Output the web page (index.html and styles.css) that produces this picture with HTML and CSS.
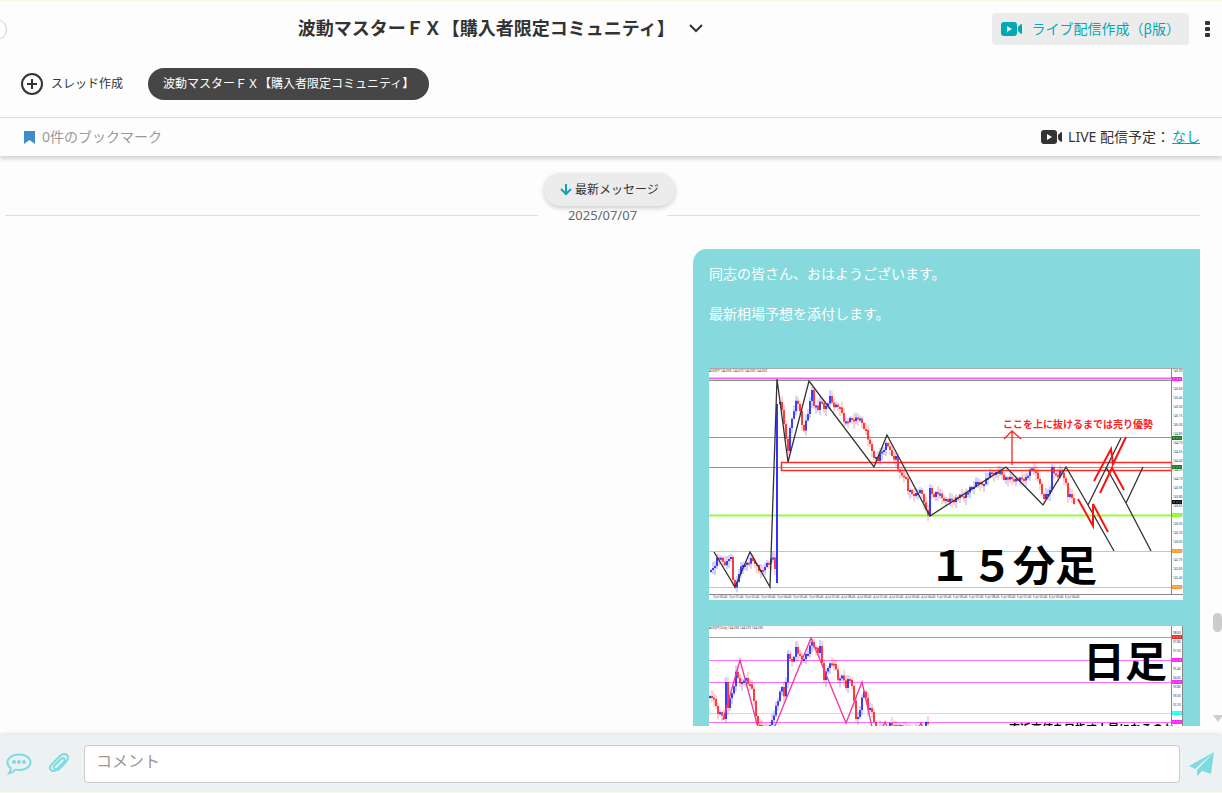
FILE: index.html
```html
<!DOCTYPE html>
<html lang="ja">
    <head>
        <meta charset="utf-8">
        <title>波動マスターＦＸ</title>
        <link rel="stylesheet" href="styles.css">
    </head>
    <body>
        <header class="header">
            <button class="header__back" aria-label="戻る"></button>
            <div class="header__top">
                <h1 class="header__title">波動マスターＦＸ【購入者限定コミュニティ】</h1>
                <button class="iconButton header__chevron" aria-label="メニューを開く">
                    <svg width="14" height="10" viewBox="0 0 14 10"><path d="M1 2l6 6 6-6" fill="none" stroke="#333" stroke-width="2"/></svg>
                </button>
            </div>
            <button class="liveButton">
                <svg width="21" height="14" viewBox="0 0 21 14"><path fill="#00a9b5" fill-rule="evenodd" d="M3 0h10q3 0 3 3v8q0 3-3 3H3q-3 0-3-3V3q0-3 3-3zM6 4v6l5-3zM17 5l3-3q1 0 1 1v8q0 1-1 1l-3-3z"/></svg>
                ライブ配信作成（β版）
            </button>
            <button class="iconButton header__more" aria-label="その他">
                <svg width="5" height="17" viewBox="0 0 5 17" fill="#333"><rect width="5" height="4" rx="1"/><rect y="6" width="5" height="4" rx="1"/><rect y="12" width="5" height="4" rx="1"/></svg>
            </button>
        </header>

        <nav class="threads">
            <button class="threads__new">
                <svg width="22" height="22" viewBox="0 0 22 22" fill="none" stroke="#333" stroke-width="2"><circle cx="11" cy="11" r="10"/><path d="M6 11h10M11 6v10"/></svg>
                <span>スレッド作成</span>
            </button>
            <button class="threads__pill">波動マスターＦＸ【購入者限定コミュニティ】</button>
        </nav>

        <div class="info">
            <div class="info__bookmark">
                <svg width="11" height="13" viewBox="0 0 11 13"><path fill="#428bca" d="M0 0h11v13L5.500 9 0 13z"/></svg>
                <span>0件のブックマーク</span>
            </div>
            <div class="info__live">
                <svg width="21" height="14" viewBox="0 0 21 14"><path fill="#333" fill-rule="evenodd" d="M3 0h10q3 0 3 3v8q0 3-3 3H3q-3 0-3-3V3q0-3 3-3zM6 4v6l5-3zM17 5l3-3q1 0 1 1v8q0 1-1 1l-3-3z"/></svg>
                <div>
                    <span>LIVE 配信予定：</span><a href="#">なし</a>
                </div>
            </div>
        </div>

        <main class="messages">
            <button class="latest">
                <svg width="12" height="12" viewBox="0 0 12 12"><path d="M6 0v10M1 5l5 5 5-5" fill="none" stroke="#169fba" stroke-width="2"/></svg>
                最新メッセージ
            </button>
            <div class="messages__list">
                <div class="date">2025/07/07</div>
                <div class="bubble">
                    <p>同志の皆さん、おはようございます。</p>
                    <p>最新相場予想を添付します。</p>

                    <svg class="chart" viewBox="0 0 474 232" role="img" aria-label="15分足チャート">
                        <rect width="474" height="232" fill="#fff"/>
                        <path d="M0 .5h474" stroke="#aaa"/>
                        <text class="chart__tiny" x="0" y="4">AUDJPY 144.056 144.070 144.030 144.032</text>
                        <path d="M0 10.500h462" stroke="#ff5cff" stroke-width="2"/>
                        <path d="M0 12.500h462M0 69.500h462M0 99.500h462" stroke="#7da67d"/>
                        <path d="M0 147.500h462" stroke="#94fb3f" stroke-width="2"/>
                        <path d="M0 183.500h462M0 219.500h462" stroke="#fbb96a"/>
                        <g id="candles15"></g>
                        <path d="M68 36v179" stroke="#33f" stroke-width="2"/>
                        <rect x="72.500" y="94.500" width="390" height="8" fill="none" stroke="#ff2a2a" stroke-width="1.500"/>
                        <path d="M5 184l21 35 15-35 20 35 7-208 11 83 21-81 65 86 13-32 43 81 76-49 37 38 23-38 22 38 26 46M379 137l33-67M397 99l20 36 25 48M417 135l17-36" fill="none" stroke="#333" stroke-width="1.300"/>
                        <path d="M303 97V63M295 71l8-8 9 8" fill="none" stroke="#f22" stroke-width="1.300"/>
                        <path d="M369 131l15 27v-22l15 28M385 113l17-32 2 15 13-27M391 125l12-25 12 22" fill="none" stroke="#f11" stroke-width="2"/>
                        <text class="chart__note" x="294" y="60">ここを上に抜けるまでは売り優勢</text>
                        <text class="chart__title" x="220" y="213">１５分足</text>
                        <path d="M462.500 0v226M0 226.500h474" stroke="#888" fill="none"/>
                        <g id="axis15"></g>
                    </svg>

                    <svg class="chart" viewBox="0 0 474 232" role="img" aria-label="日足チャート">
                        <rect width="474" height="232" fill="#fff"/>
                        <text class="chart__tiny" x="0" y="3">AUDJPY,Daily  144.030 144.070 144.030</text>
                        <path d="M0 11.500h462" stroke="#ff7c7c"/>
                        <path d="M0 34.500h462M0 56.500h462M0 96.500h462" stroke="#ff6cff"/>
                        <path d="M0 87.500h462" stroke="#8cfbfb"/>
                        <g id="candlesDay"></g>
                        <path d="M14 94l17-60 20 75M62 110l40-98 35 85 16-41 12 54M170 110l6-14 6 14M206 110l6-13 6 13" fill="none" stroke="#f5319f" stroke-width="1.300"/>
                        <text class="chart__title" x="374" y="51">日足</text>
                        <text class="chart__memo" x="300" y="107">直近高値を目指す上昇になるのか</text>
                        <path d="M462.500 0v232M473.500 0v232" stroke="#888"/>
                        <g id="axisDay"></g>
                    </svg>
                </div>
            </div>
            <div class="scrollbar">
                <span class="scrollbar__thumb"></span>
                <span class="scrollbar__arrow"></span>
            </div>
        </main>

        <form class="comment">
            <button type="button" class="iconButton" aria-label="スタンプ">
                <svg width="26" height="22" viewBox="0 0 26 22"><path d="M13 1.500c6.500 0 11.500 3.400 11.500 7.800S19.500 17 13 17c-1.200 0-2.300-.1-3.400-.4C7.800 18.600 5.500 20 3 20.300c1.200-1.500 1.800-3 1.800-5C2.700 13.800 1.500 11.700 1.500 9.300c0-4.400 5-7.800 11.500-7.800z" fill="none" stroke="#7fdade" stroke-width="2"/><g fill="#7fdade"><circle cx="8" cy="9" r="2"/><circle cx="13" cy="9" r="2"/><circle cx="18" cy="9" r="2"/></g></svg>
            </button>
            <button type="button" class="iconButton" aria-label="ファイル添付">
                <svg width="22" height="22" viewBox="0 0 22 22"><path d="M6 13l7-7c2-2 5 0 3 3l-7 7c-2 2-4 3-6 1s-1-4 1-6l8-8c3-3 6-2 7-1s2 4-1 7l-8 8M9 16c-2 1-4-1-3-3" fill="none" stroke="#7fdade" stroke-width="2" stroke-linecap="round"/></svg>
            </button>
            <input type="text" class="comment__input" placeholder="コメント" aria-label="コメント">
            <button type="button" class="iconButton" aria-label="送信">
                <svg width="26" height="26" viewBox="0 0 26 26" fill="#7fdade"><path d="M25 1L0 15l6 3zM25 1L8 19v6l4-4zM25 1L11 19l11 4z"/></svg>
            </button>
        </form>

        <script>
            // turning points of the price, x and y in chart units
            const price15 = [[1,204],[5,196],[8,188],[12,193],[16,196],[19,190],[21,191],[23,212],[26,220],[29,205],[32,198],[35,195],[38,196],[41,192],[45,194],[49,202],[52,205],[55,197],[60,194],[64,188],[66,210]];
            const price15b = [[70,36],[73,45],[76,72],[78,82],[80,62],[83,45],[87,30],[91,50],[93,64],[97,50],[100,35],[102,22],[104,36],[108,41],[111,33],[115,41],[120,30],[123,37],[128,38],[132,45],[135,55],[140,52],[148,50],[152,55],[156,63],[160,78],[164,88],[168,92],[170,87],[174,80],[177,74],[180,84],[183,90],[186,89],[189,106],[193,108],[195,106],[198,122],[202,126],[206,126],[209,123],[213,127],[216,143],[218,146],[220,122],[223,128],[227,124],[232,130],[238,133],[244,132],[248,129],[254,128],[261,120],[268,113],[271,118],[281,105],[291,105],[294,110],[308,112],[316,110],[321,102],[323,99],[328,110],[333,130],[338,125],[340,124],[342,99],[347,110],[351,103],[355,110],[358,128],[361,128],[364,134]];
            const priceDay = [[0,72],[4,71],[7,86],[14,91],[16,57],[18,81],[23,64],[27,41],[29,61],[35,51],[39,59],[43,64],[46,91],[49,101],[60,101],[65,84],[72,61],[75,72],[78,27],[81,39],[86,22],[91,34],[98,27],[102,16],[108,26],[110,22],[114,52],[118,41],[124,36],[129,57],[133,47],[136,63],[138,52],[143,62],[146,94],[151,84],[153,59],[158,82],[163,87],[165,101],[176,104],[180,99],[212,106],[216,97],[219,97]];

            function priceAt(points, x){
                for(let i = 1;i<points.length;i++){
                    if(x<=points[i][0]){
                        const [x1,y1] = points[i-1];
                        const [x2,y2] = points[i];
                        return y1+(y2-y1)*(x-x1)/(x2-x1);
                    }
                }
                return points[points.length-1][1];
            }
            function drawCandles(id, points){
                let out = '';
                let last = points[0][1];
                let n = 0;
                for(let x = points[0][0];x<=points[points.length-1][0];x+=2){
                    const close = priceAt(points,x)+((n*7)%5-2);
                    const top = Math.min(last,close);
                    const height = Math.max(2,Math.abs(last-close));
                    const color = close>last ? '#f22' : '#22f';
                    const up = 1+(n*5)%6;
                    const down = 1+(n*3)%7;
                    out += `<path d="M${x+1} ${top-up}V${top+height+down}" stroke="${color}" opacity=".4"/>`;
                    out += `<rect x="${x}" y="${top}" width="2" height="${height}" fill="${color}" opacity=".85"/>`;
                    last = close;
                    n++;
                }
                document.getElementById(id).innerHTML += out;
            }
            function drawAxis(id, start, end, first, step, tags){
                let out = '';
                for(let y = start, i = 0;y<end;y+=9,i++){
                    out += `<text class="chart__tiny" x="464" y="${y}">${(first-i*step).toFixed(2)}</text>`;
                }
                for(const [y,color] of tags){
                    out += `<rect x="463" y="${y-2}" width="10" height="4" fill="${color}"/>`;
                    out += `<path d="M464 ${y}h8" stroke="#fff" opacity=".4" stroke-dasharray="2 1"/>`;
                }
                document.getElementById(id).innerHTML = out;
            }

            drawCandles('candles15',price15);
            drawCandles('candles15',price15b);
            drawCandles('candlesDay',priceDay);
            drawAxis('axis15',4,226,145.9,.15,[[11,'#f2f'],[70,'#1c7a1c'],[99,'#1c7a1c'],[134,'#111'],[147,'#8f2'],[183,'#f93'],[219,'#f93']]);
            drawAxis('axisDay',8,96,98.6,.8,[[11,'#f22'],[34,'#f2f'],[56,'#f2f'],[87,'#2ff'],[96,'#f2f']]);

            let times = '';
            for(let i = 0;i<23;i++){
                times += `<text class="chart__tiny" x="${4+i*16}" y="230">${3+Math.floor(i/7)} Jul 0${i%9}:45</text>`;
            }
            document.getElementById('axis15').innerHTML += times;
        </script>
    </body>
</html>
```

FILE: styles.css
```css
*{
    box-sizing: border-box;
}
body{
    display: flex;
    flex-direction: column;
    height: 100vh;
    margin: 0;
    border-top: 1px solid #f8fae8;
    border-bottom: 1px solid #f8fae8;
    background: #fdfdfd;
    color: #333;
    font-family: "Noto Sans", "Noto Sans CJK JP", sans-serif;
    font-size: 14px;
    line-height: 20px;
}
button{
    padding: 0;
    border: 0;
    background: none;
    color: inherit;
    font: inherit;
    cursor: pointer;
}
svg{
    display: block;
    flex-shrink: 0;
}
.iconButton{
    display: flex;
    align-items: center;
}
.header{
    position: relative;
    display: flex;
    align-items: center;
    height: 56px;
    padding-right: 12px;
}
.header__back{
    position: absolute;
    left: -14px;
    width: 21px;
    height: 21px;
    border: 1px solid #ccc;
    border-radius: 50%;
    background: #fff;
}
.header__top{
    display: flex;
    flex: 1;
    align-items: center;
    justify-content: center;
    padding: 0 0 3px 8px;
}
.header__title{
    margin: 0;
    font-size: 18px;
    line-height: 24px;
}
.header__chevron{
    margin-left: 14px;
}
.liveButton{
    display: flex;
    align-items: center;
    gap: 9px;
    height: 32px;
    padding: 0 9px;
    border-radius: 4px;
    background: #ececec;
    color: #00a9b5;
}
.header__more{
    margin-left: 16px;
}
.threads{
    display: flex;
    align-items: center;
    gap: 25px;
    height: 61px;
    padding: 0 21px 6px;
    border-bottom: 1px solid #ddd;
    font-size: 12px;
}
.threads__new{
    display: flex;
    align-items: center;
    gap: 8px;
}
.threads__pill{
    height: 32px;
    padding: 0 15px;
    border-radius: 16px;
    background: #464646;
    color: #fff;
}
.info{
    position: relative;
    display: flex;
    align-items: center;
    justify-content: space-between;
    height: 38px;
    padding: 0 22px 0 24px;
    box-shadow: 0 3px 4px #d4d4d4;
}
.info__bookmark{
    display: flex;
    align-items: center;
    gap: 7px;
    color: #999;
}
.info__live{
    display: flex;
    align-items: center;
    gap: 6px;
}
.info__live a{
    margin-left: 2px;
    color: #00a9b5;
}
.messages{
    position: relative;
    flex: 1;
    min-height: 0;
    margin-bottom: 9px;
    overflow: hidden;
}
.latest{
    position: absolute;
    top: 17px;
    left: 50%;
    display: flex;
    align-items: center;
    gap: 3px;
    height: 33px;
    margin-left: -67px;
    padding: 0 16px;
    border-radius: 17px;
    background: #ececec;
    box-shadow: 0 2px 5px #ccc;
    font-size: 12px;
}
.messages__list{
    display: flex;
    flex-direction: column;
    padding: 49px 22px 0 5px;
}
.date{
    display: flex;
    align-items: center;
    gap: 30px;
    color: #666;
    font-size: 13px;
}
.date::before,
.date::after{
    content: "";
    flex: 1;
    height: 1px;
    background: #ddd;
}
.bubble{
    align-self: flex-end;
    width: 100%;
    max-width: 507px;
    margin-top: 24px;
    padding: 15px 17px 15px 16px;
    border-radius: 14px 0 14px 14px;
    background: #86dadd;
    color: #fff;
}
.bubble p{
    margin: 0 0 20px;
}
.chart{
    width: 100%;
    height: auto;
    margin-top: 26px;
}
.bubble p + .chart{
    margin-top: 44px;
}
.chart__tiny{
    fill: #333;
    font-size: 3px;
}
.chart__note{
    fill: #f22;
    font-size: 10px;
    font-weight: bold;
}
.chart__title{
    fill: #000;
    font-size: 42px;
    font-weight: bold;
}
.chart__memo{
    fill: #000;
    font-size: 11px;
    font-weight: bold;
}
.scrollbar{
    position: absolute;
    top: 0;
    right: 0;
    bottom: 0;
    display: flex;
    flex-direction: column;
    align-items: center;
    justify-content: flex-end;
    width: 9px;
}
.scrollbar__thumb{
    width: 9px;
    height: 19px;
    margin-bottom: 83px;
    border-radius: 5px;
    background: #ccc;
}
.scrollbar__arrow{
    margin-bottom: 4px;
    border: 5px solid transparent;
    border-top: 7px solid #ccc;
    border-bottom: 0;
}
.comment{
    display: flex;
    align-items: center;
    gap: 16px;
    height: 57px;
    padding: 0 7px 0 6px;
    background: #ecf2f3;
    box-shadow: 0 -1px 4px #ddd;
}
.comment__input{
    flex: 1;
    min-width: 0;
    height: 38px;
    margin: 0 -7px 0 -2px;
    padding: 0 11px 6px;
    border: 1px solid #ccc;
    border-radius: 4px;
    background: #fff;
    font: inherit;
    font-size: 16px;
}
.comment__input::placeholder{
    color: #999;
}
```
